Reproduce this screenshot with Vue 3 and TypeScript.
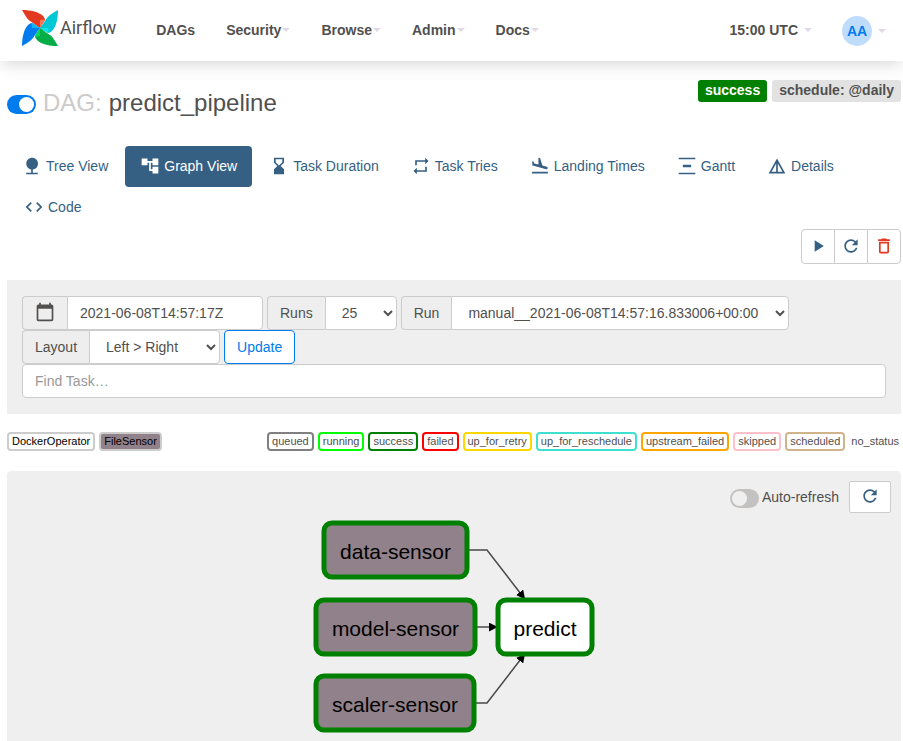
<script setup lang="ts">
import { ref } from 'vue'

interface Tab { label: string; icon: string }
interface TaskState { name: string; color: string }
interface TaskNode { id: string; x: number; y: number; w: number; fill: string }

const menus: string[] = ['Security', 'Browse', 'Admin', 'Docs']

const icons: Record<string, string> = {
  nature: 'M13 16.12c3.47-.41 6.17-3.36 6.17-6.95 0-3.87-3.13-7-7-7s-7 3.13-7 7c0 3.47 2.52 6.34 5.83 6.89V20H5v2h14v-2h-6v-3.88z',
  tree: 'M22 11V3h-7v3H9V3H2v8h7V8h2v10h4v3h7v-8h-7v3h-2V8h2v3z',
  hourglass: 'M18 22l-.01-6L14 12l3.99-4.01L18 2H6v6l4 4-4 3.99V22h12zM8 7.5V4h8v3.5l-4 4-4-4z',
  repeat: 'M7 7h10v3l4-4-4-4v3H5v6h2V7zm10 10H7v-3l-4 4 4 4v-3h12v-6h-2v4z',
  land: 'M2.5 19h19v2h-19zm7.18-5.73l4.35 1.16 5.31 1.42c.8.21 1.62-.26 1.84-1.06.21-.8-.26-1.62-1.06-1.84l-5.31-1.42-2.76-9.02L10.12 2v8.28L5.15 8.95l-.93-2.32-1.45-.39v5.17l1.6.43 5.31 1.43z',
  gantt: 'M22 2v2H2V2h20zM7 10.5v3h10v-3H7zM2 20v2h20v-2H2z',
  details: 'M12 3L2 21h20L12 3zm1 5.92L18.6 19H13V8.92zm-2 0V19H5.4L11 8.92z',
  code: 'M9.4 16.6L4.8 12l4.6-4.6L8 6l-6 6 6 6 1.4-1.4zm5.2 0l4.6-4.6-4.6-4.6L16 6l6 6-6 6-1.4-1.4z',
  play: 'M8 5v14l11-7z',
  refresh: 'M17.65 6.35C16.2 4.9 14.21 4 12 4c-4.42 0-7.99 3.58-7.99 8s3.57 8 7.99 8c3.73 0 6.84-2.55 7.73-6h-2.08c-.82 2.33-3.04 4-5.65 4-3.31 0-6-2.69-6-6s2.69-6 6-6c1.66 0 3.14.69 4.22 1.78L13 11h7V4l-2.35 2.35z',
  trash: 'M6 19c0 1.1.9 2 2 2h8c1.1 0 2-.9 2-2V7H6v12zM8 9h8v10H8V9zm7.500-5l-1-1h-5l-1 1H5v2h14V4z',
  calendar: 'M20 3h-1V1h-2v2H7V1H5v2H4c-1.1 0-2 .9-2 2v16c0 1.1.9 2 2 2h16c1.1 0 2-.9 2-2V5c0-1.100-.9-2-2-2zm0 18H4V8h16v13z',
}

const blades = [
  { angle: 0, color: '#e43921', fold: '#ff7557' },
  { angle: 90, color: '#00c7d4', fold: '#11e1ee' },
  { angle: 180, color: '#00ad46', fold: '#04d659' },
  { angle: 270, color: '#017cee', fold: '#0cb6ff' },
]

const tabs: Tab[] = [
  { label: 'Tree View', icon: 'nature' },
  { label: 'Graph View', icon: 'tree' },
  { label: 'Task Duration', icon: 'hourglass' },
  { label: 'Task Tries', icon: 'repeat' },
  { label: 'Landing Times', icon: 'land' },
  { label: 'Gantt', icon: 'gantt' },
  { label: 'Details', icon: 'details' },
  { label: 'Code', icon: 'code' },
]

const actions = [
  { label: 'Trigger DAG', icon: 'play' },
  { label: 'Refresh DAG', icon: 'refresh' },
  { label: 'Delete DAG', icon: 'trash' },
]

const states: TaskState[] = [
  { name: 'queued', color: 'gray' },
  { name: 'running', color: 'lime' },
  { name: 'success', color: 'green' },
  { name: 'failed', color: 'red' },
  { name: 'up_for_retry', color: 'gold' },
  { name: 'up_for_reschedule', color: 'turquoise' },
  { name: 'upstream_failed', color: 'orange' },
  { name: 'skipped', color: 'pink' },
  { name: 'scheduled', color: 'tan' },
  { name: 'no_status', color: 'white' },
]

const nodes: TaskNode[] = [
  { id: 'data-sensor', x: 12, y: 5, w: 143, fill: '#91818a' },
  { id: 'model-sensor', x: 4, y: 82, w: 159, fill: '#91818a' },
  { id: 'scaler-sensor', x: 4, y: 158, w: 158, fill: '#91818a' },
  { id: 'predict', x: 186, y: 82, w: 94, fill: '#ffffff' },
]

const edges: string[] = ['M155 32H175L212 80', 'M163 109H184', 'M162 185H175L212 137']

const currentTab = ref('Graph View')
const active = ref(true)
const autoRefresh = ref(false)
const baseDate = ref('2021-06-08T14:57:17Z')
const runs = ref('25')
const run = ref('manual__2021-06-08T14:57:16.833006+00:00')
const layout = ref('Left > Right')
const search = ref('')
</script>

<template>
  <div class="page">
    <header class="navbar">
      <a class="brand" href="#">
        <svg class="pinwheel" viewBox="-18 -18 36 36" aria-hidden="true">
          <g v-for="b in blades" :key="b.angle" :transform="`rotate(${b.angle})`">
            <path :fill="b.color" d="M-18-18C-9-18-1-16 3-12Q5-10 5-8L0 0C-4-3-7-5-10-7C-13-9-15-13-18-18Z" />
            <path :fill="b.fold" d="M0 0L0-8Q3-9 5-8Z" />
          </g>
        </svg>
        <span>Airflow</span>
      </a>
      <nav class="menu">
        <a href="#">DAGs</a>
        <a v-for="m in menus" :key="m" href="#">{{ m }}<i class="caret"></i></a>
      </nav>
      <div class="user-menu">
        <a class="clock" href="#">15:00 UTC<i class="caret"></i></a>
        <a class="account" href="#"><span class="avatar">AA</span><i class="caret"></i></a>
      </div>
    </header>

    <main class="content">
      <div class="title-row">
        <h1>
          <input v-model="active" class="switch" type="checkbox" aria-label="Pause or unpause DAG" />
          <span class="muted">DAG:</span>
          <span>predict_pipeline</span>
        </h1>
        <div class="badges">
          <a class="badge ok" href="#">success</a>
          <a class="badge" href="#">schedule: @daily</a>
        </div>
      </div>

      <ul class="tabs">
        <li v-for="t in tabs" :key="t.label">
          <a href="#" :class="{ current: t.label === currentTab }" @click.prevent="currentTab = t.label">
            <svg class="icon" viewBox="0 0 24 24" aria-hidden="true"><path :d="icons[t.icon]" /></svg>
            {{ t.label }}
          </a>
        </li>
      </ul>

      <div class="actions">
        <button v-for="a in actions" :key="a.label" type="button" :aria-label="a.label" :class="a.icon">
          <svg class="icon" viewBox="0 0 24 24" aria-hidden="true"><path :d="icons[a.icon]" /></svg>
        </button>
      </div>

      <form class="filters" @submit.prevent>
        <div class="filter-row">
          <div class="group">
            <label class="calendar" for="base-date" aria-label="Base date">
              <svg class="icon" viewBox="0 0 24 24" aria-hidden="true"><path :d="icons.calendar" /></svg>
            </label>
            <input id="base-date" v-model="baseDate" class="date" type="text" />
          </div>
          <div class="group">
            <label for="runs">Runs</label>
            <select id="runs" v-model="runs" class="runs"><option>25</option></select>
          </div>
          <div class="group">
            <label for="run">Run</label>
            <select id="run" v-model="run" class="run"><option>manual__2021-06-08T14:57:16.833006+00:00</option></select>
          </div>
          <div class="group">
            <label for="layout">Layout</label>
            <select id="layout" v-model="layout" class="layout"><option>Left &gt; Right</option></select>
          </div>
          <button class="update" type="submit">Update</button>
        </div>
        <input v-model="search" class="find" type="text" placeholder="Find Task…" aria-label="Find Task" />
      </form>

      <div class="legend">
        <div class="keys">
          <span class="key operator">DockerOperator</span>
          <span class="key operator sensor">FileSensor</span>
        </div>
        <div class="keys states">
          <span v-for="s in states" :key="s.name" class="key" :style="{ borderColor: s.color }">{{ s.name }}</span>
        </div>
      </div>

      <section class="graph">
        <div class="graph-tools">
          <label class="auto">
            <input v-model="autoRefresh" class="switch" type="checkbox" />
            Auto-refresh
          </label>
          <button class="reload" type="button" aria-label="Refresh">
            <svg class="icon" viewBox="0 0 24 24" aria-hidden="true"><path :d="icons.refresh" /></svg>
          </button>
        </div>
        <svg class="dag" width="284" height="218" viewBox="0 0 284 218">
          <defs>
            <marker id="arrow" viewBox="0 0 10 10" refX="8" refY="5" markerWidth="9" markerHeight="9" markerUnits="userSpaceOnUse" orient="auto">
              <path d="M0 0L10 5 0 10Z" />
            </marker>
          </defs>
          <path v-for="e in edges" :key="e" class="edge" :d="e" marker-end="url(#arrow)" />
          <g v-for="n in nodes" :key="n.id">
            <rect class="node" :x="n.x" :y="n.y" :width="n.w" height="54" rx="8" :fill="n.fill" />
            <text class="node-label" :x="n.x + n.w / 2" :y="n.y + 36">{{ n.id }}</text>
          </g>
        </svg>
      </section>
    </main>
  </div>
</template>

<style>
body {
  background: #fff;
}
</style>

<style scoped>
.page,
.page * {
  box-sizing: border-box;
}
.page {
  color: #51504f;
  font: 14px/20px 'Liberation Sans', Arial, sans-serif;
}
a {
  color: inherit;
  text-decoration: none;
}
button,
input,
select {
  margin: 0;
  font: inherit;
  color: inherit;
}
.icon {
  display: block;
  flex: none;
  width: 20px;
  height: 20px;
  fill: currentColor;
}

.navbar {
  display: flex;
  align-items: center;
  height: 61px;
  padding: 0 17px 0 22px;
  background: #fff;
  box-shadow: 0 5px 16px -2px rgba(0, 0, 0, 0.16);
  font-weight: 700;
}
.brand {
  display: flex;
  align-items: center;
  gap: 2px;
  margin: 0 40px 5px 0;
  font: 18px/20px Roboto, sans-serif;
}
.pinwheel {
  width: 36px;
  height: 36px;
}
.menu {
  display: flex;
  gap: 31px;
}
.menu a,
.clock,
.account {
  display: flex;
  align-items: center;
}
.menu,
.clock {
  padding-bottom: 2px;
}
.caret {
  margin-left: 1px;
  border: 4px solid transparent;
  border-top-color: #e2d8e6;
  border-bottom: 0;
}
.user-menu {
  display: flex;
  align-items: center;
  gap: 30px;
  margin-left: auto;
}
.user-menu .caret {
  margin-left: 6px;
}
.avatar {
  width: 30px;
  border-radius: 50%;
  background: #bfddfb;
  color: #017cee;
  line-height: 30px;
  text-align: center;
}

.content {
  padding: 0 2px 0 7px;
}
.title-row {
  display: flex;
  justify-content: space-between;
  padding-top: 19px;
  height: 85px;
}
h1 {
  display: flex;
  align-items: center;
  gap: 7px;
  height: 46px;
  margin: 0;
  font-size: 24px;
  font-weight: 400;
}
.muted {
  color: #cbcbcb;
}
.switch {
  display: block;
  flex: none;
  width: 29px;
  height: 19px;
  margin-top: 2px;
  padding: 2px;
  border-radius: 10px;
  background: #c4c2c1;
  appearance: none;
}
.switch::before {
  display: block;
  width: 15px;
  height: 15px;
  border-radius: 50%;
  background: #efefef;
  content: '';
}
.switch:checked {
  background: #017cee;
}
.switch:checked::before {
  margin-left: auto;
  background: #fff;
}
.badges {
  display: flex;
  align-items: flex-start;
  gap: 5px;
}
.badge {
  padding: 0 7px 2px;
  border-radius: 3px;
  background: #e2e2e2;
  font-weight: 700;
}
.badge.ok {
  background: green;
  color: #fff;
}

.tabs {
  display: flex;
  flex-wrap: wrap;
  margin: 0;
  padding: 0;
  list-style: none;
}
.tabs li + li {
  margin-left: 2px;
}
.tabs a {
  display: flex;
  align-items: center;
  gap: 4px;
  height: 41px;
  padding: 0 15px 1px;
  border-radius: 4px;
  color: #355f83;
}
.tabs a.current {
  background: #355f83;
  color: #fff;
}

.actions {
  display: flex;
  justify-content: flex-end;
  margin: 1px 0 16px;
}
.actions button {
  display: flex;
  align-items: center;
  justify-content: center;
  width: 34px;
  height: 35px;
  padding: 0 0 1px;
  border: 1px solid #ccc;
  background: #fff;
  color: #355f83;
}
.actions button + button {
  margin-left: -1px;
}
.actions button:first-child {
  border-radius: 4px 0 0 4px;
}
.actions button:last-child {
  border-radius: 0 4px 4px 0;
}
.actions .trash {
  color: #e43921;
}

.filters {
  padding: 16px 15px;
  background: #efefef;
}
.filter-row {
  display: flex;
  flex-wrap: wrap;
  column-gap: 4px;
}
.group {
  display: flex;
}
.group label {
  display: flex;
  align-items: center;
  height: 34px;
  padding: 0 12px;
  border: 1px solid #ccc;
  border-right: 0;
  border-radius: 4px 0 0 4px;
  background: #eee;
}
.group .calendar {
  padding-bottom: 2px;
}
.group input,
.group select,
.find {
  height: 34px;
  padding: 6px 12px;
  border: 1px solid #ccc;
  border-radius: 0 4px 4px 0;
  background: #fff;
}
.group .date {
  width: 196px;
}
.group .runs {
  width: 72px;
}
.group .run {
  width: 338px;
}
.group .layout {
  width: 131px;
}
.update {
  height: 34px;
  padding: 0 12px;
  border: 1px solid #017cee;
  border-radius: 4px;
  background: #fff;
  color: #017cee;
}
.find {
  display: block;
  width: 100%;
  border-radius: 4px;
}
.find::placeholder {
  color: #999;
}

.legend {
  display: flex;
  justify-content: space-between;
  margin: 18px 0 20px;
}
.keys {
  display: flex;
  gap: 4px;
}
.key {
  padding: 0 3px;
  border: 2px solid #ccc;
  border-radius: 4px;
  background: #fff;
  font-size: 11px;
  line-height: 15px;
}
.states .key:last-child {
  padding: 0;
}
.operator {
  color: #000;
}
.sensor {
  background: #91818a;
}

.graph {
  padding: 10px 10px 5px;
  border-radius: 4px 4px 0 0;
  background: #efefef;
}
.graph-tools {
  display: flex;
  justify-content: flex-end;
  gap: 10px;
}
.auto {
  display: flex;
  align-items: center;
  gap: 3px;
}
.reload {
  display: flex;
  align-items: center;
  justify-content: center;
  width: 42px;
  height: 32px;
  padding: 0 0 2px;
  border: 1px solid #ccc;
  border-radius: 2px;
  background: #fff;
  color: #355f83;
}
.dag {
  display: block;
  margin: 5px auto 0;
}
.edge {
  fill: none;
  stroke: #4a4a4a;
  stroke-width: 1.5;
}
.node {
  stroke: green;
  stroke-width: 5;
}
.node-label {
  fill: #000;
  font-size: 21px;
  text-anchor: middle;
}
</style>
